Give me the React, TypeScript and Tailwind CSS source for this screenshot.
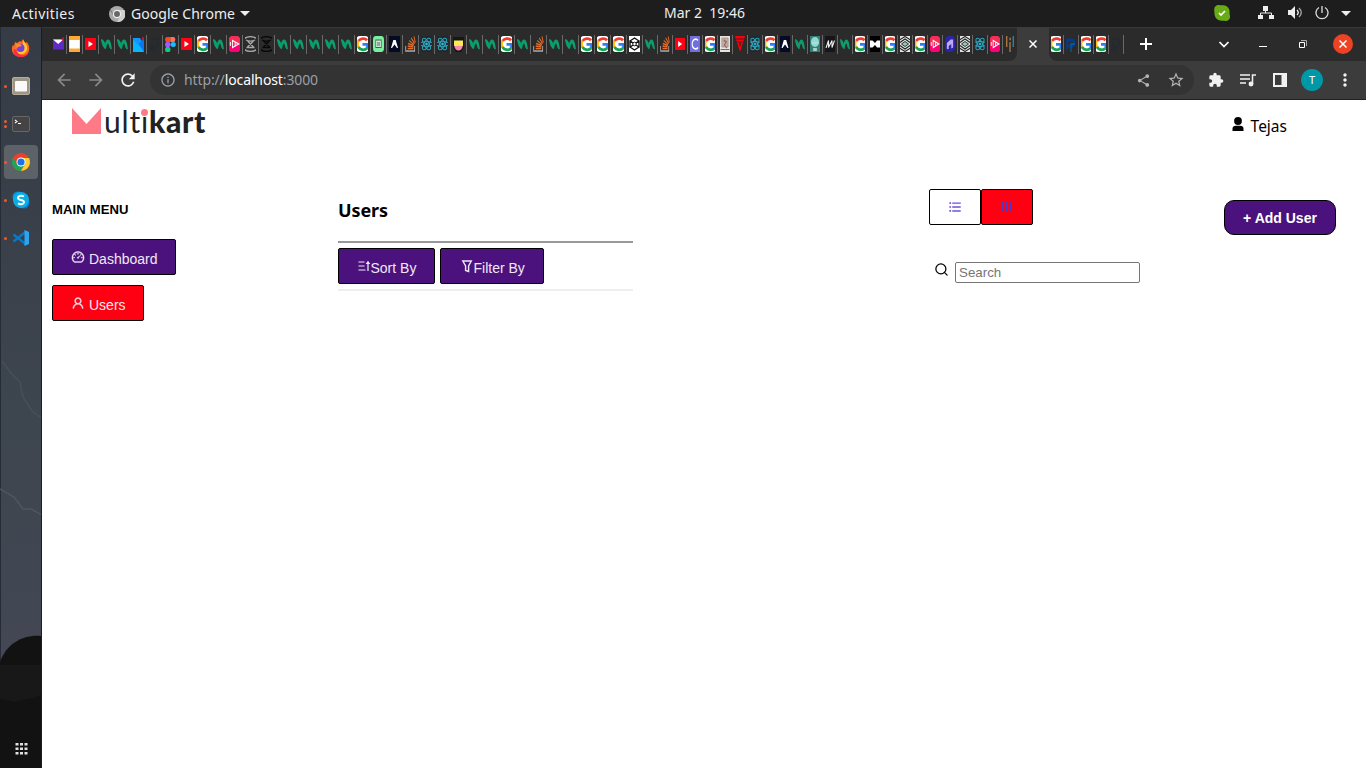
import React from "react";
import { AiOutlineDashboard, AiOutlineUser, AiOutlineUnorderedList } from "react-icons/ai";
import { FiSearch } from "react-icons/fi";
import {
  MdArrowBack,
  MdArrowForward,
  MdRefresh,
  MdInfoOutline,
  MdShare,
  MdStarBorder,
  MdExtension,
  MdMoreVert,
} from "react-icons/md";

type Kind = string;

const wideTabs: Kind[] =
  "mail doc yt n n blue gh figma yt g n play sketch sketchDark n n n n n g green dark so react react yellow n n g n so n n g g g hex".split(" ");
const narrowTabs: Kind[] =
  "n so yt c g photo tred react g dark n teal m n g medium g diamond g play purple diamond react play".split(" ");
const lastTabs: Kind[] = "g p g g gh".split(" ");

// Favicons that are wider than the tab are clipped at both sides instead of squeezed.
const clipped = ["g", "react", "medium", "diamond", "hex", "sketch", "sketchDark", "m", "dark"];

function Drawing({ kind }: { kind: Kind }) {
  switch (kind) {
    case "mail":
      return (<g><rect y="3" width="16" height="10.500" fill="#5f2bc4" /><path d="M0 3.500h15L7.500 8z" fill="#fff" /><circle cx="14.500" cy="3" r="1.800" fill="#c4123c" /></g>);
    case "doc":
      return (<g><rect width="16" height="16" fill="#ffab33" /><rect x="0.5" y="4" width="15" height="8.500" fill="#fff" /></g>);
    case "yt":
      return (<g><rect y="2" width="16" height="12" rx="1" fill="#ff0314" /><path d="M5 5v6l6.500-3z" fill="#fff" /></g>);
    case "n":
      return <path d="M0 3c3 .5 5 2 6 4.500C7.500 2.500 13 2 14.500 7.500L16 13.500c-3-.3-4.300-2.500-4.800-4.500-.8-2-2.400-1.500-3 1L7 13.300C3 12 .5 8 0 3z" fill="#0d9c6c" />;
    case "blue":
      return (<g><path d="M0 2h10L16 8v8H0z" fill="#1296ff" /><path d="M0 4l16 10v2H0z" fill="#0bb4ff" /><path d="M16 3 8 8l8 8z" fill="#0878ee" /><circle cx="14.500" cy="2.500" r="1.600" fill="#d3103d" /></g>);
    case "gh":
      return (<g fill="none" stroke="#222a33" strokeWidth="2"><path d="M3 2c3 1 7 1 10 0v6c0 3-2 3-4 3v4M7 15v-4c-3 0-4-1-4-4M0 11c3 0 2 3 6 3" /></g>);
    case "figma":
      return (<g><rect y="1" width="8" height="5" rx="2.500" fill="#f24e1e" /><path d="M4 1h4v5H4z" fill="#f24e1e" /><path d="M8 1h4.500a2.500 2.500 0 0 1 0 5H8z" fill="#ff7262" /><rect y="6" width="8" height="5" rx="2.500" fill="#a259ff" /><ellipse cx="12" cy="8.500" rx="3.800" ry="2.500" fill="#1abcfe" /><rect y="11" width="8" height="5" rx="2.500" fill="#0acf83" /></g>);
    case "g":
      return (
        <g>
          <rect x="2" width="12" height="16" rx="3.500" fill="#fff" />
          <g fill="none" strokeWidth="2.800">
            <path d="M12.600 4.200A5.700 5.700 0 0 0 4 5" stroke="#f33b2f" />
            <path d="M4 4.800a5.500 5.500 0 0 0 0 6.400" stroke="#fbbc05" />
            <path d="M4 11a5.500 5.500 0 0 0 8.500 1.400" stroke="#16a653" />
            <path d="M12 12C13.500 11 13.500 10 13.300 8.300H8" stroke="#2f7df5" />
          </g>
        </g>
      );
    case "play":
      return (<g><path d="M3 0h10l3 2v12l-3 2H3l-3-2V2z" fill="#f82c58" /><path d="M0 9h16v5l-3 2H3l-3-2z" fill="#ff0079" /><path d="M5 4.500v7l9-3.500zM9 6v4M2 6v4" fill="none" stroke="#fff" strokeWidth="1.300" /></g>);
    case "sketch":
    case "sketchDark":
      return (<g fill="none" stroke={kind === "sketch" ? "#a8a8a8" : "#080808"} strokeWidth="1.300"><path d="M2 2.500c3-2.500 9-2.500 12 0M2 13.500c3 2.500 9 2.500 12 0M3.500 4c3 1.500 6 1.500 9 0M4 11.500h8M5 5l6 6M11 5l-6 6" /></g>);
    case "green":
      return (<g><rect width="16" height="16" rx="4" fill="#7aefa1" /><rect x="4" y="4" width="8" height="7.500" fill="#cde8d3" stroke="#495a50" /><path d="M7 6v4M9 6v4" stroke="#5c6e62" /></g>);
    case "dark":
      return (<g><rect width="16" height="16" fill="#050a25" /><path d="m4.500 12 2.300-8h2.400l2.300 8h-1L8 8.500 5.500 12z" fill="#fff" /></g>);
    case "so":
      return (<g fill="none"><path d="M1 10v5h13v-5" stroke="#aaa" strokeWidth="1.300" /><path d="M4 12.500h8M4 10l8 .8M4.500 7.500l8 2M6 4.500l7 4M9 2l5 5.500M13 .5l2 6" stroke="#ef6b26" strokeWidth="1.300" /></g>);
    case "react":
      return (<g fill="none" stroke="#2fa6c0" strokeWidth="1"><rect width="16" height="16" fill="#20292d" stroke="none" /><ellipse cx="8" cy="8" rx="6.500" ry="2.500" /><ellipse cx="8" cy="8" rx="6.500" ry="2.500" transform="rotate(60 8 8)" /><ellipse cx="8" cy="8" rx="6.500" ry="2.500" transform="rotate(120 8 8)" /><circle cx="8" cy="8" r="1" fill="#59d6ed" /></g>);
    case "yellow":
      return (<g><path d="M0 1h16v10l-4 5H4l-4-5z" fill="#171717" /><path d="M1.500 4.500h13V10h-13z" fill="#ffec55" /><path d="M2 10h12c-1 6-11 6-12 0z" fill="#ff83b4" /></g>);
    case "hex":
      return (<g><rect width="16" height="16" fill="#fff" /><path d="m8 2 4.500 3v6L8 14l-4.500-3V5zM3 4.500l10 7M13 4.500l-10 7" fill="none" stroke="#111" strokeWidth="1.400" /><circle cx="8" cy="8" r="1.800" fill="#fff" stroke="#111" /></g>);
    case "c":
      return (<g><rect width="16" height="16" fill="#716ee0" /><path d="M13 4.500C10 2 3.500 3 3.500 8s6 6 9.500 3.500" fill="none" stroke="#fff" strokeWidth="1.600" /></g>);
    case "photo":
      return (<g><rect width="16" height="16" fill="#e7e4df" /><path d="M3 2h10v9H3z" fill="#c7aba0" stroke="#999" /><path d="M1 13.500h14" stroke="#555" /><path d="m6 4 4 2-3 3 4 3" fill="none" stroke="#9c615b" strokeWidth="1.500" /></g>);
    case "tred":
      return (<g><path d="M0 0h16L8 16z" fill="#f5000d" /><path d="M2 3h12M4 6h3v4M9 10V6h3" fill="none" stroke="#55141b" strokeWidth="1.200" /></g>);
    case "teal":
      return (<g><rect width="16" height="16" fill="#387e78" /><ellipse cx="8" cy="6" rx="6.500" ry="5" fill="#91d8cf" /><path d="M5 12h6v3H5z" fill="#a4d3cb" /><path d="M3 7h10" stroke="#c8eee9" /></g>);
    case "m":
      return (<g><rect width="16" height="16" fill="#15151a" /><path d="M4 12 6.500 4.500v7l3.500-7v7l2.500-7" fill="none" stroke="#eee" strokeWidth="1.100" /></g>);
    case "medium":
      return (<g><rect width="16" height="16" fill="#000" /><path d="M3 4.500h2.500L8 7l2-2.500h3v7h-3L8 9l-2.500 2.500H3z" fill="#fff" /></g>);
    case "diamond":
      return (<g><rect width="16" height="16" fill="#e5e5e5" /><path d="m1 5 7-4.500L15 5M3 6.500 8 3l5 3.500M1 11l7 4.500 7-4.500M3 9.500 8 13l5-3.500" fill="none" stroke="#222" strokeWidth="1.100" /><path d="m4.500 8 3.500-2.500L11.500 8 8 10.500z" fill="#8aceb1" stroke="#333" /></g>);
    case "purple":
      return (<g><rect width="16" height="16" rx="5" fill="#2727a7" /><path d="m3 7 6-3.500h4v8l-3 1V8L6 10v3H3z" fill="#c5a6f2" /></g>);
    case "bars":
      return (<g strokeWidth="2.400"><path d="M1.500 0v11M8 6v10" stroke="#c28245" /><path d="M7 3h2.500" stroke="#c28245" /><path d="M14.500 0v11" stroke="#159bbd" /></g>);
    default:
      return (<g><path d="M2 13V4h8c5 0 4 6 0 6H4" fill="none" stroke="#003b96" strokeWidth="3" /><path d="M8 16V8h6" fill="none" stroke="#0069aa" strokeWidth="1.500" /></g>);
  }
}

function Tab({ kind, wide }: { kind: Kind; wide?: boolean }) {
  return (
    <div className={(wide ? "w-4" : "w-[15px]") + " flex h-[19px] shrink-0 items-center justify-center border-r border-[#696969]"}>
      <svg
        className={(wide ? "w-[11px]" : "w-[10px]") + " h-4 shrink-0"}
        viewBox={clipped.includes(kind) ? (wide ? "2.5 0 11 16" : "3 0 10 16") : "0 0 16 16"}
        preserveAspectRatio="none"
      >
        <Drawing kind={kind} />
      </svg>
    </div>
  );
}

function Cross() {
  return (
    <svg className="size-2" viewBox="0 0 8 8"><path d="m.5.5 7 7M7.500.5l-7 7" stroke="#fff" strokeWidth="1.500" /></svg>
  );
}

function TopBar() {
  return (
    <header className="flex h-[27px] shrink-0 items-center bg-[#1d1d1d] font-['Noto_Sans',sans-serif] text-[14px] text-[#eeeeee]">
      <div className="w-[109px] pl-3"><span className="tracking-[0.45px]">Activities</span></div>
      <svg className="mr-1.5 size-4" viewBox="0 0 16 16">
        <circle cx="8" cy="8" r="8" fill="#a9a9a9" /><path d="M8 4h7.500A8 8 0 0 1 8 16l3.500-6z" fill="#cfcfcf" /><path d="m1.500 4 3.500 6" stroke="#777" />
        <circle cx="8" cy="8" r="3.600" fill="#666" stroke="#eee" strokeWidth="1.300" />
      </svg>
      <div className="w-[109px]"><span className="tracking-[0.05px]">Google Chrome</span></div>
      <svg className="h-[5px] w-2.5" viewBox="0 0 10 5"><path d="M0 0h10L5 5z" fill="#eee" /></svg>
      <div className="ml-[414px] flex w-[81px] justify-between whitespace-nowrap pb-0.5 text-[14px]"><span>Mar 2</span><span>19:46</span></div>
      <div className="ml-auto flex items-center pb-px pr-[15px]">
        <svg className="mr-[28px] size-4" viewBox="0 0 16 16"><path d="M5 0c1.500.5 3 .3 4.500.3C14 1 16 4 15.500 8c0 1.500.8 3 .5 4.500-.8 3-3 4-5.500 3.200C6 16 2 15 .8 10.500.3 8.500.5 7 .2 5 0 2 2-.3 5 0z" fill="#68ab17" /><path d="m5 8 2 2 4-4" stroke="#fff" strokeWidth="1.700" fill="none" /></svg>
        <svg className="mr-[14px] h-[14px] w-4" viewBox="0 0 16 14" fill="#eee"><path d="M5 0h5v5H5zM0 9h5v4H0zM11 9h5v4h-5z" /><path d="M7.500 4v3M2.500 10V7h11v3" fill="none" stroke="#eee" /></svg>
        <svg className="mr-3 h-[14px] w-[15px]" viewBox="0 0 15 14"><path d="M0 4h3l4-4v13L3 9H0z" fill="#eee" /><path d="M9 4c1.500 1.500 1.500 3.500 0 5" fill="none" stroke="#eee" strokeWidth="1.300" /><path d="M11 2c3 3 3 6 0 9" fill="none" stroke="#aaa" strokeWidth="1.300" /></svg>
        <svg className="mr-3 size-[14px]" viewBox="0 0 14 14" fill="none" stroke="#ddd" strokeWidth="1.300"><path d="M4 1.500a6 6 0 1 0 6 0M7 0v7" /></svg>
        <svg className="h-[5px] w-2.5" viewBox="0 0 10 5"><path d="M0 0h10L5 5z" fill="#eee" /></svg>
      </div>
    </header>
  );
}

function DockItem({ dots = 0, active, children }: { dots?: number; active?: boolean; children: React.ReactNode }) {
  return (
    <div className="flex h-[38px] shrink-0 items-center pl-1">
      <div className={(active ? "bg-[#5d6269]" : "") + " flex h-[34px] w-[34px] items-center rounded"}>
        <div className="flex w-2 shrink-0 flex-col gap-[2px]">
          {Array.from({ length: dots }, (_, i) => <i key={i} className="block size-[3px] rounded-full bg-[#ed5b2c]" />)}
        </div>
        {children}
      </div>
    </div>
  );
}

function Dock() {
  return (
    <aside className="relative flex w-[42px] shrink-0 flex-col overflow-hidden border-r border-[#1d1d1f] bg-[#3b424c] pt-0.5">
      <svg className="absolute inset-0 h-[741px] w-[42px]" viewBox="0 0 42 741">
        <defs><linearGradient id="sky" x2="0" y2="1"><stop stopColor="#353c45" /><stop offset=".25" stopColor="#393f48" /><stop offset=".6" stopColor="#3d454e" /><stop offset="1" stopColor="#434854" /></linearGradient></defs>
        <path fill="url(#sky)" d="M0 0h42v640H0z" />
        <path d="M.5 0v640" stroke="#252c35" />
        <path d="m2 334 9 12 9 9 3 15 9 14 10 7" fill="none" stroke="#474f59" strokeWidth="1.500" />
        <path d="m0 462 14 8 9 12 8 0 11 6" fill="none" stroke="#4d565e" strokeWidth="1.500" />
        <path d="M0 635c7-20 25-28 42-26v132H0z" fill="#121212" />
        <path d="M0 638h42v28c-5 7-18 5-27 9L0 672z" fill="#181818" />
      </svg>
      <div className="relative flex h-full flex-col">
        <DockItem>
          <svg className="size-[18px]" viewBox="0 0 18 18"><path d="M3 3l2 1 3-2 1 1 2-3 2 4 2-1c5 7 1 15-6 15C1 18-2 11 1 6l1 1z" fill="#ff6b20" /><path d="M11 1c2 3 5 5 4 10-2 5-9 6-12 1 3 1 9 1 8-5z" fill="#ffc92e" /><path d="M2 10c-2 4 2 8 7 8 4 0 7-2 8-5-5 5-10 4-13-2z" fill="#ff2850" /><circle cx="8.500" cy="9" r="4" fill="#7740db" /><path d="M3 5h5l2 2-4 1-1 2z" fill="#ff8a20" /></svg>
        </DockItem>
        <DockItem dots={1}>
          <svg className="size-[18px]" viewBox="0 0 18 18"><rect x=".5" y=".5" width="17" height="17" rx="1.500" fill="#9d9684" stroke="#b5ae9c" /><rect x="3" y="4" width="12" height="10.500" rx="1" fill="#fafafa" /></svg>
        </DockItem>
        <DockItem dots={2}>
          <svg className="size-[18px]" viewBox="0 0 18 18"><rect x=".5" y="1.500" width="17" height="15" rx="1.500" fill="#444" stroke="#666" /><path d="m3 5 2 1.500L3 8M6 8.500h3" fill="none" stroke="#fff" strokeWidth="1.100" /></svg>
        </DockItem>
        <DockItem dots={1} active>
          <svg className="size-[18px]" viewBox="0 0 18 18"><circle cx="9" cy="9" r="9" fill="#e8402f" /><path d="M1.200 4.500A9 9 0 0 0 9 18l4-7-4 2-4-2z" fill="#22a455" /><path d="M17 5H9l4 6-4 7a9 9 0 0 0 8-13z" fill="#ffcf2e" /><circle cx="9" cy="9" r="4.500" fill="#fff" /><circle cx="9" cy="9" r="3.600" fill="#1a73e8" /></svg>
        </DockItem>
        <DockItem dots={1}>
          <svg className="size-[18px]" viewBox="0 0 18 18"><circle cx="6" cy="6" r="5.500" fill="#0c8ddd" /><circle cx="12" cy="12" r="5.500" fill="#0875cf" /><circle cx="9" cy="9" r="8" fill="#09aee8" /><path d="M12 5.500C9 4 6 5 6 7c0 2.500 6 1.500 6 4 0 2-3 3-6 1.300" fill="none" stroke="#fff" strokeWidth="1.900" /></svg>
        </DockItem>
        <DockItem dots={1}>
          <svg className="size-[18px]" viewBox="0 0 18 18"><path d="M13.500 3 1.500 12.500M1.500 5.500l12 9.500" stroke="#0879c7" strokeWidth="2.400" /><path d="m12.500 1 4.500 2v12l-4.500 2z" fill="#2ba5ef" /></svg>
        </DockItem>
        <div className="mt-auto flex justify-center pb-[13px] pl-px">
          <svg className="size-[13px]" viewBox="0 0 13 13"><path d="M.5 1h3v2.500h-3zM5 1h3v2.500H5zM9.500 1h3v2.500h-3zM.5 5.500h3V8h-3zM5 5.500h3V8H5zM9.500 5.500h3V8h-3zM.5 10h3v2.500h-3zM5 10h3v2.500H5zM9.500 10h3v2.500h-3z" fill="#e0e0e0" /></svg>
        </div>
      </div>
    </aside>
  );
}

function Browser() {
  return (
    <div className="shrink-0">
      <div className="flex h-[34px] bg-[#3c3c3c]">
        <div className="flex w-[975px] shrink-0 items-center rounded-br-lg border-t border-[#383838] bg-[#2b2b2b] pb-px pl-[9px]">
          {wideTabs.map((k, i) => <Tab key={i} kind={k} wide />)}
          {narrowTabs.map((k, i) => <Tab key={i} kind={k} />)}
          <svg className="ml-[3px] h-4 w-[8px] shrink-0" viewBox="0 0 16 16" preserveAspectRatio="none"><Drawing kind="bars" /></svg>
        </div>
        <div className="flex w-8 shrink-0 items-center justify-center rounded-t-lg bg-[#3c3c3c]"><Cross /></div>
        <div className="flex min-w-0 flex-1 items-center rounded-bl-lg border-t border-[#383838] bg-[#2b2b2b] pb-px text-white">
          {lastTabs.map((k, i) => <Tab key={i} kind={k} />)}
          <svg className="ml-[16px] size-3" viewBox="0 0 12 12"><path d="M5 0h2v5h5v2H7v5H5V7H0V5h5z" fill="#fff" /></svg>
          <svg className="ml-auto h-[7px] w-3" viewBox="0 0 12 7"><path d="m1.500 1 4.500 4.500L10.500 1" fill="none" stroke="#fff" strokeWidth="1.700" /></svg>
          <span className="ml-[29px] mt-1 h-px w-2 bg-white" />
          <svg className="ml-8 size-2" viewBox="0 0 8 8" fill="none" stroke="#fff"><path d="M.5 2.500h5v5h-5z" /><path d="M2 .5h5.500V6" stroke="#aaa" /></svg>
          <span className="ml-[26px] mr-[13px] flex size-5 items-center justify-center rounded-full bg-[#ed4223]"><Cross /></span>
        </div>
      </div>
      <div className="flex h-[39px] items-center border-b border-[#222222] bg-[#3c3c3c] pl-3 text-[#f1f1f1]">
        <MdArrowBack className="text-[#888888]" size={20} />
        <MdArrowForward className="ml-3 text-[#888888]" size={20} />
        <MdRefresh className="ml-3" size={20} />
        <div className="ml-3 flex h-[30px] w-[1044px] items-center rounded-full bg-[#333333] pl-2.5 pr-[9px] text-[#9aa0a6]">
          <MdInfoOutline size={16} />
          <span className="ml-2 whitespace-nowrap pb-0.5 font-['Noto_Sans',sans-serif] text-[14px] tracking-[-0.12px]">http://<span className="text-white">localhost</span>:3000</span>
          <MdShare className="ml-auto text-[#b5b5b5]" size={15} />
          <MdStarBorder className="ml-4 text-[#b5b5b5]" size={18} />
        </div>
        <MdExtension className="ml-[14px]" size={16} />
        <svg className="ml-4 h-4 w-4" viewBox="0 0 16 16" fill="none" stroke="#f1f1f1" strokeWidth="1.500"><path d="M0 3h10M0 7h10M0 11h6M12.500 12V3H16" /><circle cx="11" cy="12" r="1.700" fill="#f1f1f1" /></svg>
        <svg className="ml-[17px] h-[14px] w-[14px]" viewBox="0 0 14 14"><path fillRule="evenodd" d="M0 0h14v14H0zm2 2v10h6.500V2z" fill="#f1f1f1" /></svg>
        <span className="ml-[14px] flex size-[22px] items-center justify-center rounded-full bg-[#0097a7] font-['Noto_Sans',sans-serif] text-[11px] text-white">T</span>
        <MdMoreVert className="ml-3" size={20} />
      </div>
    </div>
  );
}

const button = "flex h-9 items-center rounded-[2px] border border-black text-[14px] text-[#f0e9f5]";

function Content() {
  return (
    <main className="flex min-h-0 flex-1 flex-col bg-white font-['Liberation_Sans',sans-serif] text-black">
      <div className="flex h-[89px] items-start justify-between pl-[30px] pr-[79px]">
        <div className="flex pt-2">
          <svg className="h-[26px] w-[29px]" viewBox="0 0 29 26"><path d="m0 0 14.500 16L29 0v26H0z" fill="#ff7a87" /></svg>
          <div className="relative ml-[3px] mt-[-4px] whitespace-nowrap font-['Lato',sans-serif] text-[30px] leading-[34px] text-[#222222]">
            <span className="tracking-[0.8px]">ulti</span><span className="font-black tracking-[0.7px]">kart</span>
            <i className="absolute left-[37px] top-[5px] size-[7px] rounded-full bg-[#ff7a87]" />
          </div>
        </div>
        <div className="flex pt-[16px]">
          <svg className="mr-[7px] mt-px h-[14px] w-3" viewBox="0 0 12 14"><circle cx="6" cy="4" r="3.900" /><path d="M.5 14v-2.500C.5 9.500 2 8.700 3.500 8.700h5c1.500 0 3 .8 3 2.800V14z" /></svg>
          <span className="font-['Noto_Sans',sans-serif] text-[15.500px] leading-5">Tejas</span>
        </div>
      </div>
      <div className="flex pl-2.5">
        <nav className="flex w-[286px] flex-col items-start pt-[13px]">
          <h2 className="text-[13.120px] font-bold leading-4 tracking-[0.1px]">MAIN MENU</h2>
          <button className={button + " mt-[21px] w-[124px] bg-[#4b127d] pl-[18px]"}><AiOutlineDashboard className="mr-1 shrink-0 stroke-current" strokeWidth={26} size={14} /><span className="pt-1">Dashboard</span></button>
          <button className={button + " mt-2.5 w-[92px] bg-[#ff0012] pl-[18px]"}><AiOutlineUser className="mr-1 shrink-0 stroke-current" strokeWidth={26} size={14} /><span className="pt-1">Users</span></button>
        </nav>
        <section className="w-[591px]">
          <h1 className="pt-[9px] font-['Noto_Sans',sans-serif] text-[18px] font-bold leading-6 tracking-[-0.1px]">Users</h1>
          <div className="mt-[19px] flex h-[50px] w-[295px] items-start gap-[5px] border-b-2 border-t-2 border-b-[#eeeeee] border-t-[#999999] pt-[5px]">
            <button className={button + " w-[97px] bg-[#4b127d] pl-[18px]"}>
              <svg className="h-[14px] w-[14px] shrink-0" viewBox="0 0 14 14" fill="none" stroke="currentColor"><path d="M1.500 3h6M1.500 7h6M1.500 11h7" strokeWidth="1.200" /><path d="M11 12V3" strokeWidth="1.300" /><path d="M8.700 5 11 1.800 13.300 5z" fill="currentColor" stroke="none" /></svg>
              <span className="ml-[-0.5px] whitespace-nowrap pt-1">Sort By</span>
            </button>
            <button className={button + " w-[104px] bg-[#4b127d] pl-[18.500px]"}>
              <svg className="mb-px h-[14px] w-[14px] shrink-0" viewBox="0 0 14 14" fill="none" stroke="currentColor" strokeWidth="1.400"><path d="M2.800 2h8.500L8.600 7v5.500L5.600 11.500V7z" /></svg>
              <span className="whitespace-nowrap pt-1">Filter By</span>
            </button>
          </div>
        </section>
        <section className="w-[295px]">
          <div className="flex">
            <button className="flex h-9 w-[52px] items-center justify-center rounded-[2px] border border-black text-[#5535c9]"><AiOutlineUnorderedList className="stroke-current" strokeWidth={20} size={14} /></button>
            <button className="flex h-9 w-[52px] items-center justify-center rounded-[2px] border border-black bg-[#ff0012]">
              <svg className="h-[12px] w-3" viewBox="0 0 12 12" shapeRendering="crispEdges"><path d="M0 1h3v3H0zM4 1h3v3H4zM8 1h3v3H8zM0 5h3v3H0zM4 5h3v3H4zM8 5h3v3H8zM0 9h3v2H0zM4 9h3v2H4zM8 9h3v2H8z" fill="#5535c9" /></svg>
            </button>
          </div>
          <div className="mt-[37px] flex pl-[5px]">
            <FiSearch size={15} />
            <input className="ml-[6px] h-[21px] w-[185px] rounded-[2px] border border-[#767676] px-[3px] text-[13.333px] placeholder:text-[#757575]" placeholder="Search" />
          </div>
        </section>
        <button className="mt-[11px] h-[35px] w-[112px] rounded-[10px] border border-black bg-[#4b127d] pt-0.5 text-[14px] font-bold text-white">+ Add User</button>
      </div>
    </main>
  );
}

export default function App() {
  return (
    <div className="flex h-[768px] w-[1366px] flex-col overflow-hidden">
      <TopBar />
      <div className="flex min-h-0 flex-1">
        <Dock />
        <div className="flex min-w-0 flex-1 flex-col"><Browser /><Content /></div>
      </div>
    </div>
  );
}
